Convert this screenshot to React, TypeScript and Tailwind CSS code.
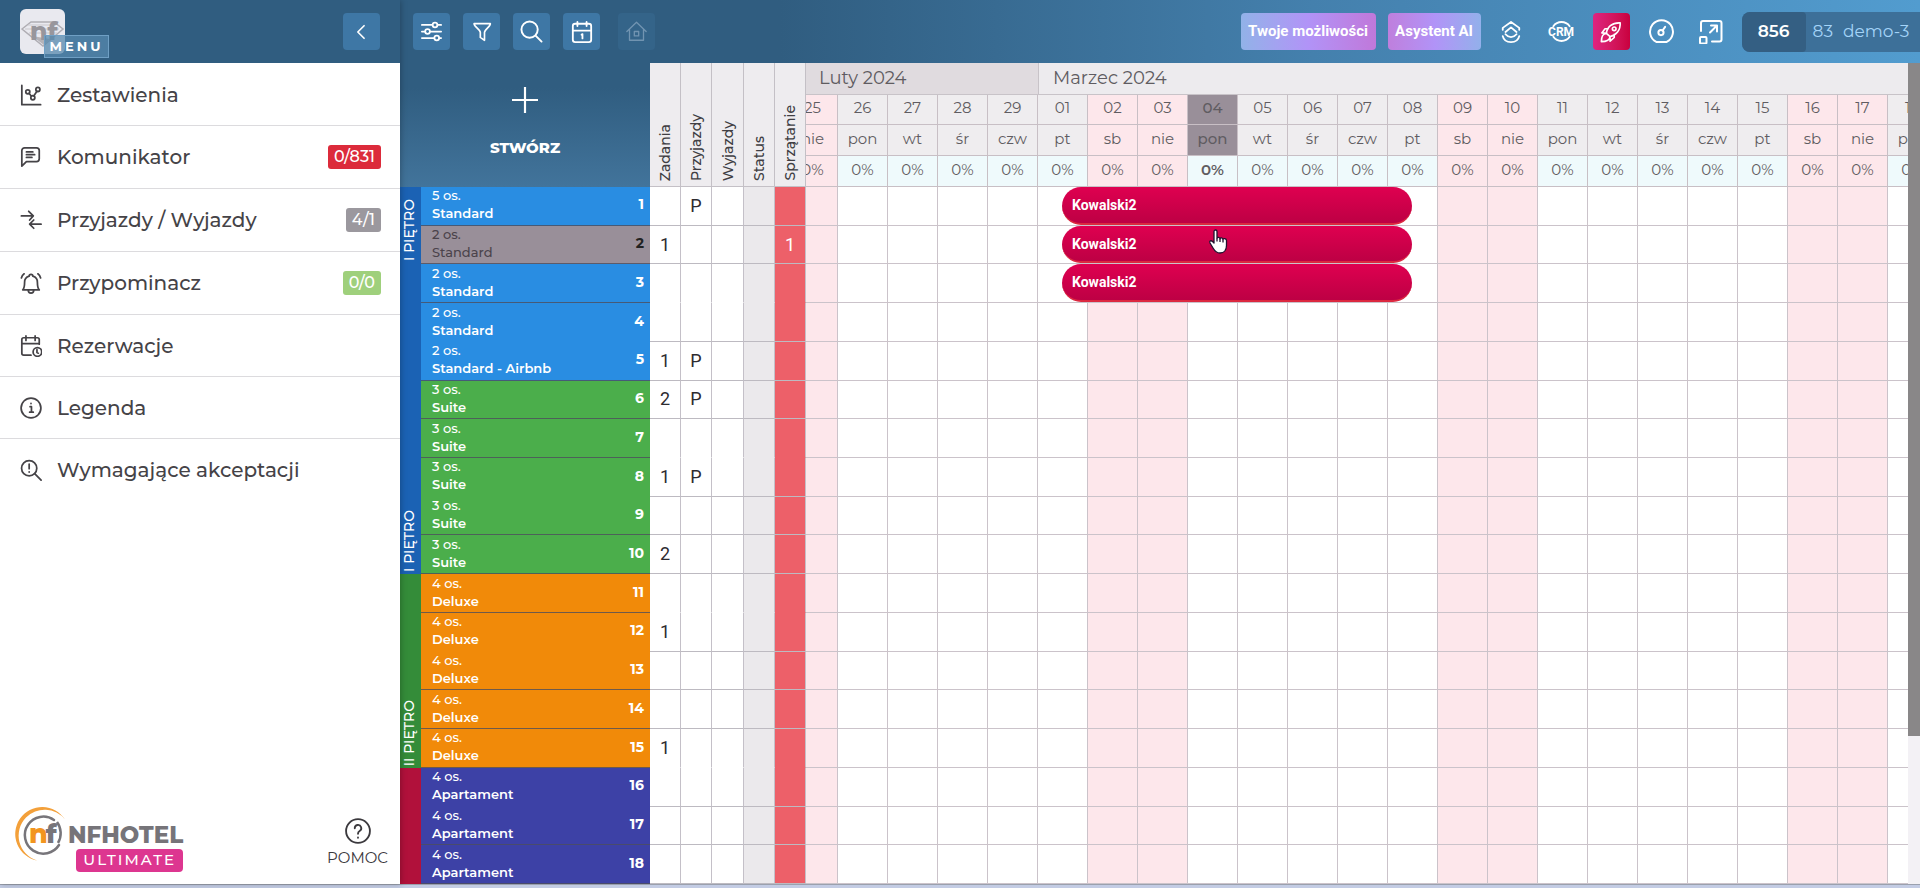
import type { ReactNode } from 'react'

const heading = 'font-[Montserrat,Inter,sans-serif]'

type IconProps = { size?: number; width?: number; children: ReactNode }

function Icon({ size = 24, width = 2, children }: IconProps) {
  return (
    <svg
      width={size}
      height={size}
      viewBox="0 0 24 24"
      fill="none"
      stroke="currentColor"
      strokeWidth={width}
      strokeLinecap="round"
      strokeLinejoin="round"
      aria-hidden="true"
      className="shrink-0"
    >
      {children}
    </svg>
  )
}

const menuItems = [
  {
    label: 'Zestawienia',
    icon: (
      <>
        <path d="M2 1.5v21h20.500" />
        <circle cx="8.500" cy="8.500" r="2.200" />
        <circle cx="14" cy="15" r="2.200" />
        <circle cx="19.500" cy="6" r="2.200" />
        <path d="M10 10.300l2.500 3M15 13l3.500-5" />
      </>
    ),
  },
  {
    label: 'Komunikator',
    badge: '0/831',
    badgeClass: 'bg-[#dc2b3b]',
    icon: (
      <path d="M2 22V5a3 3 0 0 1 3-3h13a3 3 0 0 1 3 3v9a3 3 0 0 1-3 3H7l-5 5zM7 6.500h7M7 9.500h9M7 12.500h6" />
    ),
  },
  {
    label: 'Przyjazdy / Wyjazdy',
    badge: '4/1',
    badgeClass: 'bg-[#9b989e]',
    icon: <path d="M1.500 7.500H14M9.500 2.500l5 5-4 4.500M23 16.500H11M15 12l-4.500 4.500L15 21" />,
  },
  {
    label: 'Przypominacz',
    badge: '0/0',
    badgeClass: 'bg-[#9fd07c]',
    icon: (
      <path d="M3 19.500h18c-2-2-2-4-2-8a7 7 0 0 0-5-7 2 2 0 0 0-4 0 7 7 0 0 0-5 7c0 4 0 6-2 8zM9 20a3 3 0 0 0 6 0M1.500 6.500c.5-2 1.500-3.500 3-4.500M22.500 6.500c-.5-2-1.500-3.500-3-4.500" />
    ),
  },
  {
    label: 'Rezerwacje',
    icon: (
      <>
        <path d="M12 22H4a2 2 0 0 1-2-2V5a2 2 0 0 1 2-2h15a2 2 0 0 1 2 2v5M2 9.500h19M6.500 1v5M16.500 1v5" />
        <circle cx="19" cy="18.500" r="4.700" />
        <path d="M18.500 16v3l1.500.8" />
      </>
    ),
  },
  {
    label: 'Legenda',
    icon: (
      <>
        <circle cx="12" cy="12" r="10.800" />
        <path d="M11 10.500h1.500v6M10.500 16.500h4M12 7v.2" />
      </>
    ),
  },
  {
    label: 'Wymagające akceptacji',
    icon: (
      <>
        <circle cx="10" cy="10" r="8.300" />
        <path d="M16 16l7 7M10 5.500v5M10 14v.2" />
      </>
    ),
  },
]

const floors = [
  { name: 'I PIĘTRO', className: 'row-span-10 bg-[#1b62b4]', repeated: true },
  { name: 'II PIĘTRO', className: 'row-span-5 bg-[#348c39]', repeated: false },
  { name: '', className: 'row-span-3 bg-[#b1113b]', repeated: false },
]

type Room = { no: number; beds: number; type: string; tasks?: number; arrival?: boolean; cleaning?: number; guest?: string }

const rooms: Room[] = [
  { no: 1, beds: 5, type: 'Standard', arrival: true, guest: 'Kowalski2' },
  { no: 2, beds: 2, type: 'Standard', tasks: 1, cleaning: 1, guest: 'Kowalski2' },
  { no: 3, beds: 2, type: 'Standard', guest: 'Kowalski2' },
  { no: 4, beds: 2, type: 'Standard' },
  { no: 5, beds: 2, type: 'Standard - Airbnb', tasks: 1, arrival: true },
  { no: 6, beds: 3, type: 'Suite', tasks: 2, arrival: true },
  { no: 7, beds: 3, type: 'Suite' },
  { no: 8, beds: 3, type: 'Suite', tasks: 1, arrival: true },
  { no: 9, beds: 3, type: 'Suite' },
  { no: 10, beds: 3, type: 'Suite', tasks: 2 },
  { no: 11, beds: 4, type: 'Deluxe' },
  { no: 12, beds: 4, type: 'Deluxe', tasks: 1 },
  { no: 13, beds: 4, type: 'Deluxe' },
  { no: 14, beds: 4, type: 'Deluxe' },
  { no: 15, beds: 4, type: 'Deluxe', tasks: 1 },
  { no: 16, beds: 4, type: 'Apartament' },
  { no: 17, beds: 4, type: 'Apartament' },
  { no: 18, beds: 4, type: 'Apartament' },
]

const typeColors: Record<string, string> = {
  Standard: 'bg-[#298de2]',
  'Standard - Airbnb': 'bg-[#298de2]',
  Suite: 'bg-[#4bae4b]',
  Deluxe: 'bg-[#f18a09]',
  Apartament: 'bg-[#3d41a6]',
}

const weekdays = ['nie', 'pon', 'wt', 'śr', 'czw', 'pt', 'sb']
const dates = [25, 26, 27, 28, 29, 1, 2, 3, 4, 5, 6, 7, 8, 9, 10, 11, 12, 13, 14, 15, 16, 17, 18]
const days = dates.map((date, i) => ({
  date: String(date).padStart(2, '0'),
  name: weekdays[i % 7],
  weekend: i % 7 === 0 || i % 7 === 6,
  today: i === 8,
}))

const statusColumns = [
  { name: 'Zadania', width: 'w-[31px]' },
  { name: 'Przyjazdy', width: 'w-[31px]' },
  { name: 'Wyjazdy', width: 'w-8' },
  { name: 'Status', width: 'w-[31px]' },
  { name: 'Sprzątanie', width: 'w-[31px]' },
]

const toolButton = 'flex size-[37px] items-center justify-center rounded'

function Sidebar() {
  return (
    <aside className="relative z-10 flex w-[400px] shrink-0 flex-col bg-white shadow-[1px_0_6px_rgba(0,0,0,0.25)]">
      <div className="flex h-[63px] shrink-0 items-center justify-between bg-[#305d80] pr-5 pl-5">
        <button className="relative size-[45px] rounded-md bg-[#e9e9ef]" aria-label="Menu">
          <svg viewBox="0 0 45 45" className="size-[45px]" fill="none" aria-hidden="true">
            <path d="M2 20l9-7h23l9 7-20 17z" stroke="#b0aeb4" strokeWidth="1.500" />
            <path d="M8 16h28M5 20h34M9 24h28" stroke="#c9c7cc" />
            <path d="M12 27l12 9 6-6z" fill="#b5b3b8" />
            <text x="10" y="31" fontSize="25" fontWeight="800" fill="#98969c" className={heading}>
              nf
            </text>
          </svg>
          <span
            className={`${heading} absolute top-[26px] left-6 flex h-[23px] w-[65px] items-center justify-center border border-[#6f9fc4] bg-[#5688ad]/75 text-[13px] font-bold tracking-[3px] text-white`}
          >
            MENU
          </span>
        </button>
        <button className={`${toolButton} bg-[#3e77a5] text-white`} aria-label="Zwiń menu">
          <Icon size={20} width={2}>
            <path d="M14.500 4.500L7 12l7.500 7.500" />
          </Icon>
        </button>
      </div>
      <nav className="pt-px">
        {menuItems.map(item => (
          <a
            key={item.label}
            href="#"
            className={`flex items-center border-b border-[#dcdbde] pr-[19px] pl-5 text-[#454347] last:border-b-0 ${
              item.badge ? 'h-[63px]' : 'h-[62px]'
            }`}
          >
            <Icon size={22} width={1.9}>{item.icon}</Icon>
            <span className={`${heading} ml-[15px] flex-1 text-xl font-medium`}>{item.label}</span>
            {item.badge && (
              <span className={`${heading} rounded-[3px] px-1.5 text-base leading-6 font-medium text-white ${item.badgeClass}`}>
                {item.badge}
              </span>
            )}
          </a>
        ))}
      </nav>
      <div className="mt-auto flex items-end justify-between pr-3 pb-3 pl-[14px]">
        <div className="flex">
          <svg width="54" height="58" viewBox="0 0 54 58" fill="none" aria-hidden="true">
            <path d="M51 13.500A27 27 0 1 0 23 54.500 26 26 0 0 1 12 11.500 26 26 0 0 1 51 13.500z" fill="#f3a03a" />
            <path d="M45 39A18.500 18.500 0 1 1 40 14" stroke="#77757a" strokeWidth="2.500" strokeLinecap="round" />
            <path d="M44 37A19 19 0 0 0 43 16" stroke="#77757a" strokeWidth="2.500" />
            <text x="15" y="37" fontSize="27" fontWeight="800" fill="#f2951f" className={heading}>
              n<tspan fill="#77757a" dx="-2">f</tspan>
            </text>
          </svg>
          <div className={`${heading} flex flex-col items-end pt-[17px]`}>
            <span className="text-[23px] leading-6 font-extrabold text-[#767479]">NFHOTEL</span>
            <span className="mt-0.5 flex h-[23px] w-[107px] items-center justify-center rounded bg-[#dd3690] text-[15px] font-medium tracking-[2px] text-white">
              ULTIMATE
            </span>
          </div>
        </div>
        <a href="#" className={`${heading} mb-1 flex flex-col items-center gap-1 text-[15px] leading-5 text-[#3b393d]`}>
          <Icon size={26} width={1.7}>
            <circle cx="12" cy="12" r="11" />
            <path d="M9 9.500a3 3 0 1 1 4.500 2.500c-1 .6-1.500 1-1.500 2.500M12 18v.2" />
          </Icon>
          POMOC
        </a>
      </div>
    </aside>
  )
}

function Toolbar() {
  return (
    <header className="flex h-[63px] shrink-0 items-center overflow-hidden bg-linear-to-r from-[#305d80] from-25% via-[#4480ad] via-60% to-[#529ccf] pl-[13px]">
      <div className="flex gap-[13px] text-white">
        <button className={`${toolButton} bg-[#3e77a5]`} aria-label="Ustawienia">
          <Icon size={21} width={2}>
            <path d="M1 4.500h12M19 4.500h4M1 12h3.500M10.500 12H23M1 19.500h14M21 19.500h2" />
            <circle cx="16" cy="4.500" r="2.700" />
            <circle cx="7.500" cy="12" r="2.700" />
            <circle cx="18" cy="19.500" r="2.700" />
          </Icon>
        </button>
        <button className={`${toolButton} bg-[#3e77a5]`} aria-label="Filtr">
          <Icon size={20} width={2}>
            <path d="M2.500 2h19.500c0 3.500-7 7-7 10.500v9.500l-5-3.500v-6C10 9 2.500 5.500 2.500 2z" />
          </Icon>
        </button>
        <button className={`${toolButton} bg-[#3e77a5]`} aria-label="Szukaj">
          <Icon size={23} width={2}>
            <circle cx="10" cy="10" r="8.500" />
            <path d="M16.500 16.500l6 6" />
          </Icon>
        </button>
        <button className={`${toolButton} bg-[#3e77a5]`} aria-label="Kalendarz">
          <Icon size={22} width={2}>
            <rect x="2" y="3" width="20" height="20" rx="2.500" />
            <path d="M2 10.500h20M7 1v4.500M17 1v4.500M11.500 15l1-.7V19" />
          </Icon>
        </button>
      </div>
      <button disabled className={`${toolButton} ml-[18px] bg-[#346489] text-[#7194b1]`} aria-label="Obiekt">
        <Icon size={21} width={1.5}>
          <path d="M1 12L12 1.500 23 12M4 9.500v12.500h16V9.500" />
          <rect x="9.500" y="12" width="5" height="5" />
        </Icon>
      </button>
      <div className="ml-auto flex shrink-0 items-center font-[Roboto,sans-serif] text-white">
        <button className="mr-3 h-[37px] w-[135px] rounded bg-linear-to-r from-[#91b2e8] via-[#b193f7] to-[#c078da] text-[15px] font-bold">
          Twoje możliwości
        </button>
        <button className="mr-3 h-[37px] w-[93px] rounded bg-linear-to-r from-[#bf7fdd] via-[#b193f7] to-[#92b0eb] text-[15px] font-bold">
          Asystent AI
        </button>
        <div className="flex gap-[13px]">
          <button className={toolButton} aria-label="Warstwy">
            <Icon size={22} width={2}>
              <path d="M3 9.500v-2l9-6.500 9 6.500v2M6 12l6-5 6 5M6 14.500c2 2.500 4 3 6 3s4-.5 6-3M3 16.500c1 4.500 5 6.500 9 6.500s8-2 9-6.500" />
            </Icon>
          </button>
          <button className={`${toolButton} relative`} aria-label="CRM">
            <Icon size={23} width={2}>
              <path d="M3.500 6.500a10.500 10.500 0 0 1 17 0M3.500 17.500a10.500 10.500 0 0 0 17 0" />
            </Icon>
            <span className="absolute text-[12px] leading-4 font-bold">CRM</span>
          </button>
          <button className={`${toolButton} bg-linear-to-r from-[#df2380] to-[#c9003e]`} aria-label="Start">
            <Icon size={22} width={1.8}>
              <path d="M7 13.500C7.500 7 13 1.500 22 2c.5 8-4.500 14-11 15zM9 8.500H5.500L2 13l5 .5M15.500 14.500V18L11 22v-5M7 13.500c-4 0-5.500 4-5.500 9 5 0 9-1.500 9.500-5.500" />
              <circle cx="15.500" cy="8.500" r="2" />
            </Icon>
          </button>
          <button className={toolButton} aria-label="Wydajność">
            <Icon size={25} width={1.9}>
              <path d="M7 22a11 11 0 1 1 10 0z" />
              <circle cx="11.500" cy="13" r="2.500" />
              <path d="M13 11l2.500-3.500" />
            </Icon>
          </button>
          <button className={toolButton} aria-label="Pełny ekran">
            <Icon size={24} width={2}>
              <path d="M2 11V3a2 2 0 0 1 2-2h16.500a2 2 0 0 1 2 2v16.500a2 2 0 0 1-2 2H13M11 12.500l6.500-6.500M12 5.500h6v6" />
              <rect x="1" y="17" width="6.500" height="6.500" rx="1" />
            </Icon>
          </button>
        </div>
        <div className={`${heading} ml-3 flex h-10 items-center overflow-hidden rounded-l-lg bg-[#3d7099] text-[17px]`}>
          <span className="flex h-full w-16 items-center justify-center rounded-r-sm bg-[#345f83] font-semibold">856</span>
          <span className="pl-[7px] text-[#a4d4f8]">83</span>
          <span className="w-[87px] pl-2.5 whitespace-nowrap text-[#a4d4f8]">demo-3</span>
        </div>
      </div>
    </header>
  )
}

function RoomTable() {
  return (
    <div className="flex w-[406px] shrink-0 flex-col">
      <div className="flex h-[124px] shrink-0">
        <button className="flex w-[250px] flex-col items-center bg-linear-to-b from-[#305d80] from-20% to-[#42749b] pt-6 text-white">
          <Icon size={26} width={2}>
            <path d="M12 0v24M0 12h24" />
          </Icon>
          <span className={`${heading} mt-[25px] text-[15px] leading-5 font-extrabold`}>STWÓRZ</span>
        </button>
        {statusColumns.map(column => (
          <div
            key={column.name}
            className={`flex items-end justify-center border-r border-b border-[#c4c0c6] bg-[#eeecef] pb-[5px] ${column.width}`}
          >
            <span className={`${heading} rotate-180 text-[14px] leading-5 font-medium text-[#403e43] [writing-mode:vertical-rl]`}>
              {column.name}
            </span>
          </div>
        ))}
      </div>
      <div className="flex min-h-0 flex-1">
        <div className={`${heading} grid w-[21px] grid-rows-[repeat(18,minmax(0,1fr))] text-[14px] leading-5 font-medium text-white`}>
          {floors.map(floor => (
            <div key={floor.className} className={`flex flex-col items-center overflow-hidden pt-3 pr-[3px] pb-0.5 ${floor.className}`}>
              {floor.repeated && <span className="rotate-180 [writing-mode:vertical-rl]">{floor.name}</span>}
              <span className="mt-auto rotate-180 [writing-mode:vertical-rl]">{floor.name}</span>
            </div>
          ))}
        </div>
        <table className="flex flex-1" aria-label="Pokoje">
          <tbody className="grid flex-1 grid-rows-[repeat(18,minmax(0,1fr))]">
            {rooms.map(room => {
              const hovered = room.no === 2
              const roomLine = room.no % 4 === 0 ? 'border-b-0 pb-1' : 'border-b border-[#4d4e5c]/80 pb-[3px]'
              const cellLine = room.no % 4 === 3 ? 'border-b-transparent' : 'border-b-[#bdbac1]'
              const cell = `flex items-center justify-center border-r border-b border-r-[#c4c0c8] ${cellLine}`
              return (
                <tr key={room.no} className="flex font-[Roboto,sans-serif] text-lg text-[#2d2b30]">
                  <th
                    scope="row"
                    className={`${heading} flex w-[229px] items-center justify-between overflow-hidden pr-1.5 pl-[11px] text-left font-medium ${roomLine} ${
                      hovered ? 'bg-[#998f99] text-[#4b434b]' : `${typeColors[room.type]} text-white`
                    }`}
                  >
                    <span className="text-[13px] leading-[18px]">
                      {room.beds} os.
                      <br />
                      <span className={hovered ? 'font-medium' : 'font-semibold'}>{room.type}</span>
                    </span>
                    <span className={`pt-0.5 text-[14px] font-bold ${hovered ? 'text-[#222]' : ''}`}>{room.no}</span>
                  </th>
                  <td className={`${cell} w-[31px]`}>{room.tasks}</td>
                  <td className={`${cell} w-[31px]`}>{room.arrival && 'P'}</td>
                  <td className={`${cell} w-8`} />
                  <td className={`${cell} w-[31px] bg-[#ebe9ec]`} />
                  <td className={`${cell} w-[31px] bg-[#ed6069] text-white`}>{room.cleaning}</td>
                </tr>
              )
            })}
          </tbody>
        </table>
      </div>
    </div>
  )
}

function Calendar() {
  return (
    <div className="min-w-0 flex-1 overflow-hidden">
      {/* the first day is partly scrolled out of view */}
      <table className="-ml-[18px] flex h-full w-max flex-col" aria-label="Kalendarz rezerwacji">
        <thead className={`${heading} flex h-[124px] shrink-0 flex-col text-[15px] text-[#5f5c61]`}>
          <tr className="flex h-8 text-left text-lg">
            <th className="flex w-[251px] items-center border-r border-b border-[#c8c3c8] bg-[#e0dbdf] pb-0.5 pl-[31px] font-normal">
              Luty 2024
            </th>
            <th className="flex flex-1 items-center border-b border-[#c8c3c8] bg-[#edebee] pb-0.5 pl-[14px] font-normal">Marzec 2024</th>
          </tr>
          {(['date', 'name'] as const).map(key => (
            <tr key={key} className={key === 'date' ? 'flex h-[30px]' : 'flex h-[31px]'}>
              {days.map(day => (
                <th
                  key={day.date}
                  className={`flex w-[50px] items-center justify-center border-r border-b border-[#c8bfc5] pb-0.5 ${
                    day.today ? 'bg-[#998f99] font-medium' : `font-normal ${day.weekend ? 'bg-[#fde7eb]' : 'bg-[#efedef]'}`
                  }`}
                >
                  {day[key]}
                </th>
              ))}
            </tr>
          ))}
          <tr className="flex h-[31px]">
            {days.map(day => (
              <td
                key={day.date}
                className={`flex w-[50px] items-center justify-center border-r border-b border-[#c8bfc5] pb-0.5 ${
                  day.weekend ? 'bg-[#fde7eb]' : 'bg-[#effafc]'
                } ${day.today ? 'font-semibold' : ''}`}
              >
                0%
              </td>
            ))}
          </tr>
        </thead>
        <tbody className="grid min-h-0 flex-1 grid-rows-[repeat(18,minmax(0,1fr))]">
          {rooms.map(room => (
            <tr key={room.no} className="flex">
              {days.map(day => (
                <td
                  key={day.date}
                  className={`relative w-[50px] border-r border-b border-[#cbc3ca] ${day.weekend ? 'bg-[#fde7eb]' : 'bg-white'}`}
                >
                  {room.guest && day.date === '01' && (
                    <button className="absolute inset-y-0 left-6 z-10 w-[350px] rounded-full border-b-2 border-[#dc2840] bg-linear-to-b from-[#df0050] to-[#bd0044] pl-2.5 text-left font-[Roboto,sans-serif] text-sm font-bold text-white">
                      {room.guest}
                    </button>
                  )}
                  {room.no === 2 && day.date === '04' && (
                    <svg
                      width="22"
                      height="26"
                      viewBox="0 0 22 26"
                      className="absolute top-[3px] left-5 z-20"
                      fill="#fff"
                      stroke="#23102f"
                      strokeWidth="1.300"
                      strokeLinejoin="round"
                      aria-hidden="true"
                    >
                      <path d="M6 2.500c0-2 3-2 3 0v7c0-1.500 3-1.500 3 .5 0-1.500 3-1.500 3 .5 0-1.500 3.500-1 3.500 1v5c0 4.500-2.500 7.500-6.500 7.500-3.500 0-5-1.500-7-5l-3-5c-1-2 1-3 2.500-1.500L6 14z" />
                      <path d="M9 9.500v3M12 10v3M15 10.500v3" />
                    </svg>
                  )}
                </td>
              ))}
            </tr>
          ))}
        </tbody>
      </table>
    </div>
  )
}

export default function App() {
  return (
    <div className="flex h-screen flex-col overflow-hidden bg-white">
      <div className="flex min-h-0 flex-1">
        <Sidebar />
        <main className="flex min-w-0 flex-1 flex-col">
          <Toolbar />
          <div className="flex min-h-0 flex-1">
            <RoomTable />
            <Calendar />
            <div className="w-3 shrink-0 bg-[#f3f1f5]">
              <div className="h-[82%] bg-[#898788]" />
            </div>
          </div>
        </main>
      </div>
      <footer className="h-1 shrink-0 border-t border-[#9ba1ae] bg-[#c3cce4]" />
    </div>
  )
}
